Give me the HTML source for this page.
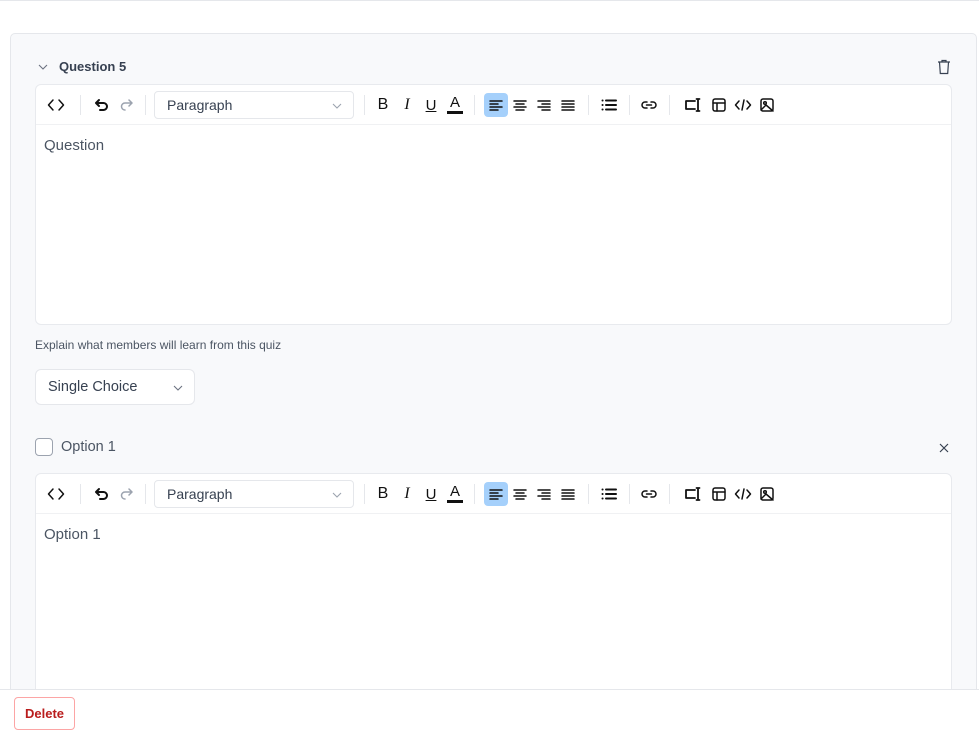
<!DOCTYPE html>
<html style="overflow:hidden;height:738px"><head><style>
*{box-sizing:border-box;margin:0;padding:0}
body{width:979px;height:738px;position:relative;background:#fff;font-family:"Liberation Sans",sans-serif;overflow:hidden;color:#374151}
.a{position:absolute}
.card{left:10px;top:33px;width:967px;height:690px;background:#f8f9fb;border:1px solid #e5e7eb;border-radius:5px}
.ed{left:35px;width:917px;background:#fff;border:1px solid #e8eaee;border-radius:6px}
.tb{position:absolute;left:0;top:0;width:100%;height:40px;border-bottom:1px solid #f0f1f3}
.sep{position:absolute;top:10px;width:1px;height:20px;background:#e5e7eb}
.ic{position:absolute;top:8px;width:24px;height:24px;display:flex;align-items:center;justify-content:center}
.ic svg{width:18px;height:18px;stroke:#111;fill:none;stroke-width:1.5;stroke-linecap:round;stroke-linejoin:round}
.sel{position:absolute;left:118px;top:6px;width:200px;height:28px;border:1px solid #e5e7eb;border-radius:4px;font-size:14px;color:#374151;padding:5px 12px}
.txt{position:absolute;left:8px;top:52px;font-size:15px;color:#4b5563}
</style></head><body>
<div class="a" style="left:0;top:0;width:979px;height:1px;background:#e5e7eb"></div>
<div class="a card"></div>
<svg class="a" style="left:37px;top:61px" width="12" height="12" viewBox="0 0 12 12"><path d="M2 4l4 4 4-4" stroke="#6b7280" fill="none" stroke-width="1.1"/></svg>
<div class="a" style="left:59px;top:59px;font-size:13px;font-weight:bold;color:#374151">Question 5</div>
<svg class="a" style="left:935px;top:58px" width="18" height="18" viewBox="0 0 18 18" fill="none" stroke="#374151" stroke-width="1.2"><path d="M3 4h12M7 4V2.5h4V4M4.5 4l.8 11.5h7.4L13.5 4"/></svg>

<div class="a ed" style="top:84px;height:241px"></div>
<div class="a" style="left:35px;top:338px;font-size:12px;color:#4b5563">Explain what members will learn from this quiz</div>
<div class="a" style="left:35px;top:369px;width:160px;height:36px;background:#fff;border:1px solid #e5e7eb;border-radius:6px;font-size:14.5px;color:#374151;padding:9px 12px">Single Choice
<svg style="position:absolute;right:10px;top:13px" width="12" height="10" viewBox="0 0 12 10"><path d="M2 3l4 4 4-4" stroke="#6b7280" fill="none" stroke-width="1.1"/></svg></div>
<div class="a" style="left:35px;top:438px;width:18px;height:18px;border:1.5px solid #9ca3af;border-radius:4px;background:#fff"></div>
<div class="a" style="left:61px;top:439px;font-size:14.5px;color:#4b5563">Option 1</div>
<svg class="a" style="left:937px;top:441px" width="14" height="14" viewBox="0 0 14 14"><path d="M3 3l8 8M11 3l-8 8" stroke="#374151" stroke-width="1.2"/></svg>
<div class="a ed" style="top:473px;height:240px"></div>

<div class="a" style="left:0;top:689px;width:979px;height:49px;background:#fff;border-top:1px solid #e5e7eb"></div>
<div class="a" style="left:14px;top:697px;width:61px;height:33px;border:1px solid #fca5a5;border-radius:4px;font-size:13px;color:#b91c1c;text-align:center;line-height:31px;font-weight:bold;background:#fff">Delete</div>

<template id="t">
<div class="tb">
 <div class="ic" style="left:8px"><svg viewBox="0 0 18 18"><path d="M6 4L1.5 9 6 14M12 4l4.5 5-4.5 5"/></svg></div>
 <div class="sep" style="left:44px"></div>
 <div class="ic" style="left:54px"><svg viewBox="0 0 18 18" style="stroke-width:2"><path d="M6 4L3 7l3 3M3 7h7.5a3.5 3.5 0 010 7H7"/></svg></div>
 <div class="ic" style="left:78px"><svg viewBox="0 0 18 18" style="stroke:#9ca3af"><path d="M12 4l3 3-3 3M15 7H8a3.5 3.5 0 000 7"/></svg></div>
 <div class="sep" style="left:109px"></div>
 <div class="sel">Paragraph<svg style="position:absolute;right:10px;top:9px" width="12" height="10" viewBox="0 0 12 10"><path d="M2 3l4 4 4-4" stroke="#9ca3af" fill="none" stroke-width="1.1"/></svg></div>
 <div class="sep" style="left:328px"></div>
 <div class="ic" style="left:335px;font-size:16px;color:#111">B</div>
 <div class="ic" style="left:359px;font-size:16px;color:#111;font-style:italic;font-family:'Liberation Serif',serif">I</div>
 <div class="ic" style="left:383px;font-size:15px;color:#111;text-decoration:underline">U</div>
 <div class="ic" style="left:407px;font-size:15px;color:#111;flex-direction:column;line-height:14px">A<div style="width:16px;height:3px;background:#111;margin-top:1px"></div></div>
 <div class="sep" style="left:438px"></div>
 <div class="ic" style="left:448px;background:#a5d0fb;border-radius:4px"><svg viewBox="0 0 18 18"><path d="M3 5h12M3 8h8M3 11h12M3 14h8"/></svg></div>
 <div class="ic" style="left:472px"><svg viewBox="0 0 18 18"><path d="M3 5h12M5 8h8M3 11h12M5 14h8"/></svg></div>
 <div class="ic" style="left:496px"><svg viewBox="0 0 18 18"><path d="M3 5h12M7 8h8M3 11h12M7 14h8"/></svg></div>
 <div class="ic" style="left:520px"><svg viewBox="0 0 18 18"><path d="M3 5h12M3 8h12M3 11h12M3 14h12"/></svg></div>
 <div class="sep" style="left:552px"></div>
 <div class="ic" style="left:561px"><svg viewBox="0 0 18 18" style="stroke-width:2"><path d="M2.5 4.5h.1M2.5 9h.1M2.5 13.5h.1M6 4.5h10M6 9h10M6 13.5h10"/></svg></div>
 <div class="sep" style="left:593px"></div>
 <div class="ic" style="left:601px"><svg viewBox="0 0 18 18"><path d="M7 6H5a3 3 0 000 6h2M11 6h2a3 3 0 010 6h-2M6.5 9h5"/></svg></div>
 <div class="sep" style="left:633px"></div>
 <div class="ic" style="left:645px"><svg viewBox="0 0 18 18" style="stroke-width:1.8"><path d="M11 5H2v8h9M14 3v12M12.5 3h3M12.5 15h3"/></svg></div>
 <div class="ic" style="left:671px"><svg viewBox="0 0 18 18"><rect x="3" y="3" width="12" height="12" rx="2"/><path d="M3 7h12M7 7v8"/></svg></div>
 <div class="ic" style="left:695px"><svg viewBox="0 0 18 18"><path d="M5 5L1.5 9 5 13M13 5l3.5 4-3.5 4M10 4l-2 10"/></svg></div>
 <div class="ic" style="left:719px"><svg viewBox="0 0 18 18"><rect x="3" y="3" width="12" height="12" rx="2"/><circle cx="7" cy="7" r="1.3"/><path d="M3 14l5-5 7 6"/></svg></div>
</div>
</template>
<script>
var t=document.getElementById('t').innerHTML;
var eds=document.querySelectorAll('.ed');
eds[0].innerHTML=t+'<div class="txt">Question</div>';
eds[1].innerHTML=t+'<div class="txt">Option 1</div>';
</script>
</body></html>
